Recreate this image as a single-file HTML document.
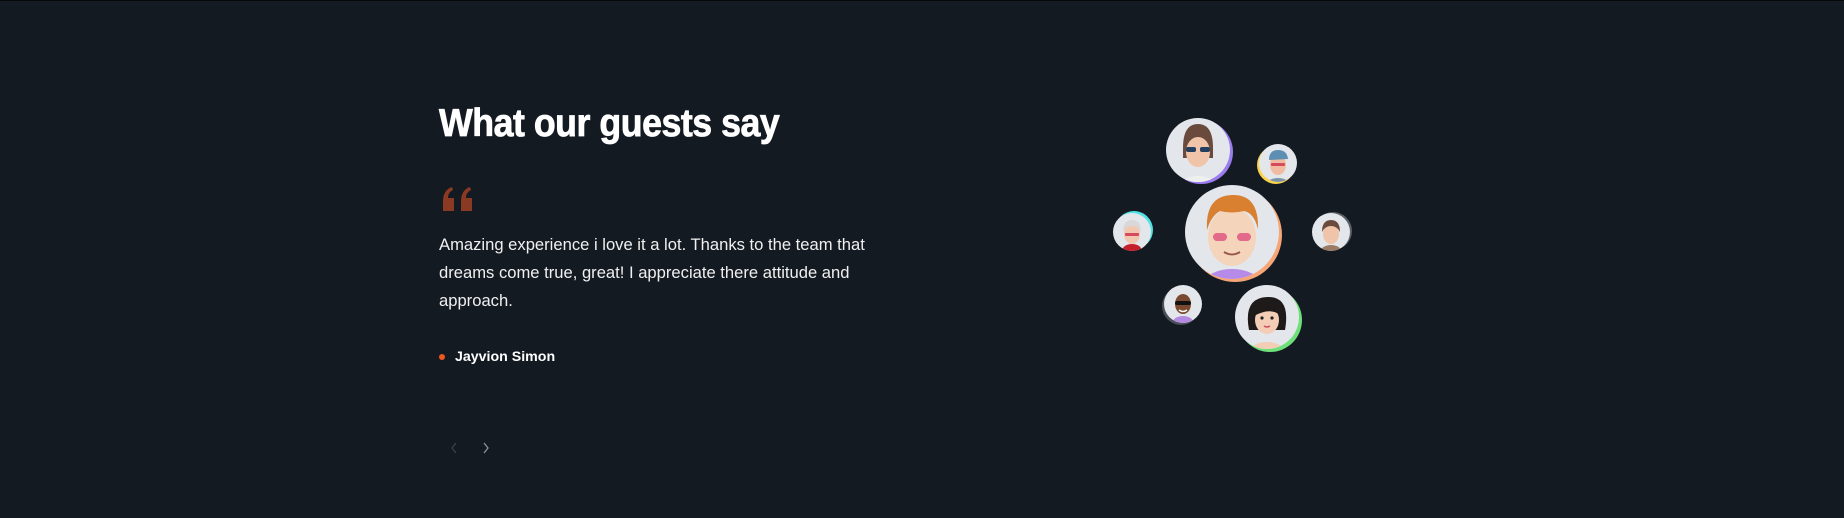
<!DOCTYPE html>
<html><head><meta charset="utf-8"><style>
html,body{margin:0;padding:0}
body{width:1844px;height:518px;background:#141a22;position:relative;overflow:hidden;font-family:"Liberation Sans",sans-serif;color:#fff}
.top{position:absolute;left:0;top:0;width:100%;height:1px;background:#050709}
h2{position:absolute;left:439px;top:99px;margin:0;font-size:39px;font-weight:900;letter-spacing:-0.5px;line-height:50px;transform:scaleX(0.915);transform-origin:0 0;-webkit-text-stroke:0.8px #fff}
.q{position:absolute;left:442px;top:186px}
p{position:absolute;left:439px;top:231px;margin:0;width:450px;font-size:16.6px;line-height:28px;color:#f0f0f0}
.name{position:absolute;left:455px;top:349px;font-size:14.2px;font-weight:700}
.dot{position:absolute;left:439px;top:354px;width:6px;height:6px;border-radius:50%;background:#f0561f}
svg.av{position:absolute;left:0;top:0}
</style></head><body>
<div class="top"></div>
<h2>What our guests say</h2>
<svg class="q" width="34" height="26" viewBox="0 0 34 26"><path d="M1 25V15C1 8 4 3 10 1l1 3C7 6 6 9 6 12h6v13Z" fill="#8a3a22"/><path d="M19 25V15C19 8 22 3 28 1l1 3C25 6 24 9 24 12h6v13Z" fill="#8a3a22"/></svg>
<p>Amazing experience i love it a lot. Thanks to the team that dreams come true, great! I appreciate there attitude and approach.</p>
<div class="dot"></div>
<div class="name">Jayvion Simon</div>
<svg style="position:absolute;left:449px;top:441px" width="44" height="14" viewBox="0 0 44 14"><path d="M7 2 3 7l4 5" stroke="#3a414b" stroke-width="1.3" fill="none"/><path d="M35 2l4 5-4 5" stroke="#8d939b" stroke-width="1.3" fill="none"/></svg>
<svg class="av" width="1844" height="518">
<defs><clipPath id="c1"><circle cx="1198" cy="150" r="32"/></clipPath><clipPath id="c2"><circle cx="1278" cy="163" r="19"/></clipPath><clipPath id="c3"><circle cx="1232" cy="232" r="47"/></clipPath><clipPath id="c4"><circle cx="1132" cy="232" r="19"/></clipPath><clipPath id="c5"><circle cx="1331" cy="232" r="19"/></clipPath><clipPath id="c6"><circle cx="1183" cy="304" r="19"/></clipPath><clipPath id="c7"><circle cx="1267" cy="317" r="32"/></clipPath></defs>
<circle cx="1201" cy="152" r="32" fill="#9b7cf0"/><circle cx="1198" cy="150" r="32" fill="#e3e6ea"/>
<g clip-path="url(#c1)"><ellipse cx="1198" cy="186" rx="18" ry="10" fill="#eef0f0"/><path d="M1183 148q0-24 15-24t15 24v10h-30z" fill="#6b4a3e"/><ellipse cx="1198" cy="152" rx="12" ry="15" fill="#f0c4a8"/><rect x="1186" y="147" width="10" height="5" rx="2" fill="#243e60"/><rect x="1200" y="147" width="10" height="5" rx="2" fill="#243e60"/></g>
<circle cx="1276" cy="165" r="19" fill="#f9d34c"/><circle cx="1278" cy="163" r="19" fill="#e3e6ea"/>
<g clip-path="url(#c2)"><ellipse cx="1278" cy="184" rx="11" ry="6" fill="#7d93a8"/><ellipse cx="1278" cy="165" rx="8" ry="10" fill="#f0bba0"/><path d="M1269 160q0-10 9-10t10 9z" fill="#5c8fb3"/><rect x="1271" y="163" width="14" height="3" rx="1" fill="#d44b60"/></g>
<circle cx="1235" cy="235" r="47" fill="#f6a576"/><circle cx="1232" cy="232" r="47" fill="#e3e6ea"/>
<g clip-path="url(#c3)"><ellipse cx="1232" cy="284" rx="28" ry="15" fill="#b68ae8"/><ellipse cx="1232" cy="237" rx="24" ry="29" fill="#f5d4bc"/><path d="M1207 230q-2-34 25-35t26 34q-4-16-14-18-12 3-24 0-9 5-13 19z" fill="#d98030"/><rect x="1213" y="233" width="14" height="8" rx="4" fill="#e36a8a"/><rect x="1237" y="233" width="14" height="8" rx="4" fill="#e36a8a"/><path d="M1224 252q8 5 16 0" stroke="#9a5a4a" stroke-width="2" fill="none"/></g>
<circle cx="1134" cy="230" r="19" fill="#4fe3e3"/><circle cx="1132" cy="232" r="19" fill="#e3e6ea"/>
<g clip-path="url(#c4)"><ellipse cx="1132" cy="251" rx="10" ry="7" fill="#c4202c"/><ellipse cx="1132" cy="234" rx="8" ry="10" fill="#f2c7b0"/><path d="M1123 232q0-12 9-12t9 12q-3-6-9-6t-9 6z" fill="#d8d8d8"/><rect x="1125" y="233" width="14" height="3" rx="1" fill="#d44b60"/></g>
<circle cx="1333" cy="231" r="19" fill="#59606a"/><circle cx="1331" cy="232" r="19" fill="#e3e6ea"/>
<g clip-path="url(#c5)"><ellipse cx="1331" cy="251" rx="10" ry="6" fill="#9a7b65"/><ellipse cx="1331" cy="234" rx="8" ry="10" fill="#f0c4a8"/><path d="M1322 232q0-12 9-12t9 12q-3-6-9-6t-9 6z" fill="#6b4a3e"/></g>
<circle cx="1181" cy="306" r="19" fill="#4a5058"/><circle cx="1183" cy="304" r="19" fill="#e3e6ea"/>
<g clip-path="url(#c6)"><ellipse cx="1183" cy="322" rx="10" ry="6" fill="#b48ae0"/><ellipse cx="1183" cy="304" rx="8" ry="10" fill="#7a4a30"/><rect x="1175" y="301" width="16" height="4" rx="2" fill="#111"/><path d="M1179 310q4 3 8 0" stroke="#fff" stroke-width="1.5" fill="none"/></g>
<circle cx="1270" cy="320" r="32" fill="#6ee07a"/><circle cx="1267" cy="317" r="32" fill="#e3e6ea"/>
<g clip-path="url(#c7)"><ellipse cx="1267" cy="350" rx="16" ry="8" fill="#f3cdb5"/><path d="M1249 330q-6-32 18-33t18 33z" fill="#1e1a1a"/><ellipse cx="1267" cy="320" rx="12" ry="14" fill="#f3cdb5"/><path d="M1254 316q4-13 13-13t13 12q-10-8-26 1z" fill="#1e1a1a"/><circle cx="1262" cy="318" r="1.6" fill="#222"/><circle cx="1272" cy="318" r="1.6" fill="#222"/><path d="M1264 326q3 2 6 0" stroke="#d44b60" stroke-width="1.5" fill="none"/></g>
</svg>
</body></html>
